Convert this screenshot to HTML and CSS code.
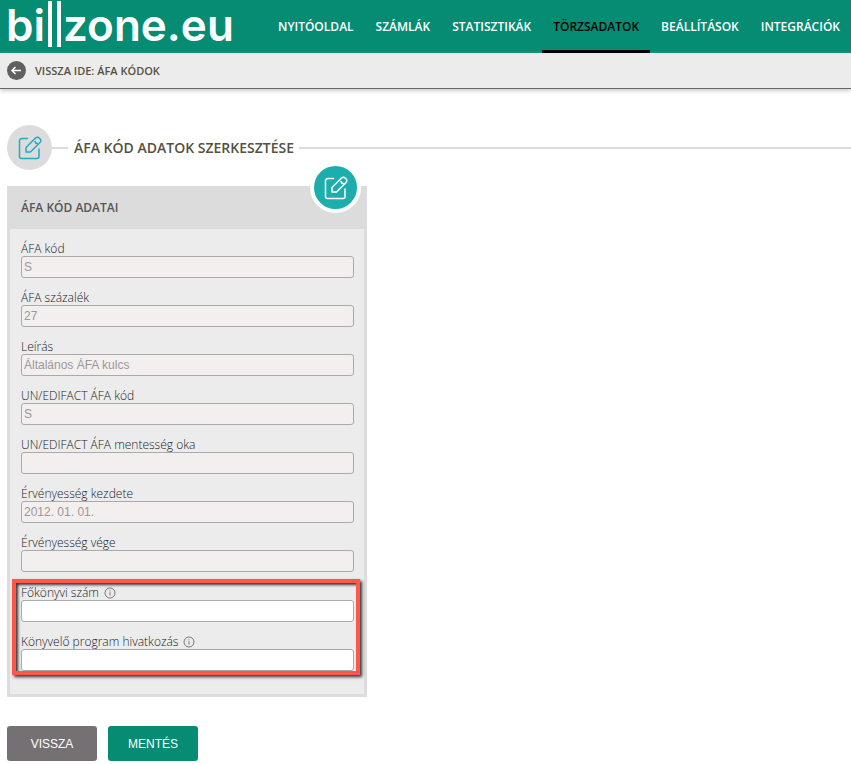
FILE: index.html
```
<!DOCTYPE html>
<html lang="hu">
<head>
	<meta charset="UTF-8">
	<title>billzone.eu - ÁFA kód adatok szerkesztése</title>
	<meta name="viewport" content="width=device-width,initial-scale=1">
	<link rel="stylesheet" href="styles.css">
</head>
<body>
	<!-- Icons -->
	<svg class="sprite" aria-hidden="true">
		<symbol id="icon-edit" viewBox="0 0 24 24">
			<path d="M9.500 2.500H4a2.500 2.500 0 0 0-2.500 2.500v15.500a2 2 0 0 0 2 2h15.500a2 2 0 0 0 2-2V13"/>
			<path d="M8 16v-4.500L17.500 2a2.600 2.600 0 0 1 3.700 0l.8.8a2.600 2.600 0 0 1 0 3.700L12.500 16zM17 5.500q.4 2 2.300 2"/>
		</symbol>
		<symbol id="icon-info" viewBox="0 0 12 12">
			<circle cx="6" cy="6" r="5"/>
			<path d="M6 5.200v3.300M6 3.300v1"/>
		</symbol>
	</svg>

	<!-- Menubar -->
	<header class="menubar">
		<a href="#" class="logo" aria-label="billzone.eu">
			<svg width="236" height="50" viewBox="0 0 236 50">
				<text x="-1" y="41">bi</text>
				<rect x="41" y="1" width="4" height="46"/>
				<rect x="50" y="1" width="4" height="46"/>
				<text x="56" y="41">zone.eu</text>
			</svg>
		</a>
		<nav class="menu">
			<a href="#">NYITÓOLDAL</a>
			<a href="#">SZÁMLÁK</a>
			<a href="#">STATISZTIKÁK</a>
			<a href="#" class="active">TÖRZSADATOK</a>
			<a href="#">BEÁLLÍTÁSOK</a>
			<a href="#">INTEGRÁCIÓK</a>
		</nav>
	</header>

	<!-- Back link -->
	<div class="backbar">
		<a href="#">
			<svg class="back-icon" width="19" height="19" viewBox="0 0 19 19">
				<circle cx="9.500" cy="9.500" r="9.500"/>
				<path d="M14 9.500H5M8.500 6l-3.500 3.500 3.500 3.500"/>
			</svg>
			VISSZA IDE: ÁFA KÓDOK
		</a>
	</div>

	<main>
		<div class="page-title">
			<span class="title-icon"><svg class="edit"><use href="#icon-edit"/></svg></span>
			<h1>ÁFA KÓD ADATOK SZERKESZTÉSE</h1>
		</div>

		<form>
			<section class="panel">
				<div class="panel-head">
					<h2>ÁFA KÓD ADATAI</h2>
					<button type="button" class="edit-button" aria-label="Szerkesztés"><svg class="edit"><use href="#icon-edit"/></svg></button>
				</div>
				<div class="fields">
					<div class="field">
						<label for="vat-code">ÁFA kód</label>
						<input type="text" id="vat-code" value="S" disabled>
					</div>
					<div class="field">
						<label for="vat-percent">ÁFA százalék</label>
						<input type="text" id="vat-percent" value="27" disabled>
					</div>
					<div class="field">
						<label for="description">Leírás</label>
						<input type="text" id="description" value="Általános ÁFA kulcs" disabled>
					</div>
					<div class="field">
						<label for="edifact-code">UN/EDIFACT ÁFA kód</label>
						<input type="text" id="edifact-code" value="S" disabled>
					</div>
					<div class="field">
						<label for="edifact-reason">UN/EDIFACT ÁFA mentesség oka</label>
						<input type="text" id="edifact-reason" disabled>
					</div>
					<div class="field">
						<label for="valid-from">Érvényesség kezdete</label>
						<input type="text" id="valid-from" value="2012. 01. 01." disabled>
					</div>
					<div class="field">
						<label for="valid-to">Érvényesség vége</label>
						<input type="text" id="valid-to" disabled>
					</div>
					<div class="highlight">
						<div class="field">
							<label for="ledger">Főkönyvi szám <svg class="info"><use href="#icon-info"/></svg></label>
							<input type="text" id="ledger">
						</div>
						<div class="field">
							<label for="accounting">Könyvelő program hivatkozás <svg class="info"><use href="#icon-info"/></svg></label>
							<input type="text" id="accounting">
						</div>
					</div>
				</div>
			</section>

			<div class="buttons">
				<button type="button" class="btn">VISSZA</button>
				<button type="submit" class="btn save">MENTÉS</button>
			</div>
		</form>
	</main>
</body>
</html>
```
FILE: styles.css
```
* {
	box-sizing: border-box;
}
body {
	margin: 0;
	background: #fff;
	color: #555;
	font-family: "Open Sans", sans-serif;
	font-size: 12px;
}
a {
	color: inherit;
	text-decoration: none;
}
h1, h2 {
	margin: 0;
	font-weight: 600;
}
.sprite {
	display: none;
}

/* Menubar */
.menubar {
	display: flex;
	justify-content: space-between;
	height: 53px;
	padding-left: 7px;
	background: #058c73;
	color: #fff;
}
.logo svg {
	display: block;
	overflow: visible;
	fill: #fff;
	font-family: Inter, sans-serif;
	font-size: 44px;
	font-weight: 600;
}
.menu {
	display: flex;
}
.menu a {
	display: flex;
	align-items: center;
	padding: 2px 11px 0;
	border-bottom: 3px solid transparent;
	font-weight: 600;
	white-space: nowrap;
}
.menu a.active {
	border-color: #000;
	color: #000;
}

/* Back link */
.backbar {
	display: flex;
	height: 36px;
	padding: 0 7px;
	background: #ececec;
	border-bottom: 1px solid #666;
	box-shadow: 0 2px 4px #ccc;
	color: #555140;
	font-size: 11px;
	font-weight: 600;
}
.backbar a {
	display: flex;
	align-items: center;
	gap: 9px;
}
.back-icon {
	fill: #606060;
}
.back-icon path {
	fill: none;
	stroke: #fff;
	stroke-width: 1.5;
}

main {
	padding: 36px 0 3px 7px;
}

/* Page title with the line running behind it */
.page-title {
	display: flex;
	align-items: center;
	margin-bottom: 16px;
}
.page-title::after {
	content: "";
	flex: 1;
	height: 2px;
	background: #dcdcdc;
}
.page-title h1 {
	display: flex;
	align-items: center;
	gap: 6px;
	margin-right: 5px;
	color: #555140;
	font-size: 14px;
}
.page-title h1::before {
	content: "";
	width: 16px;
	height: 2px;
	background: #dcdcdc;
}
.title-icon {
	display: flex;
	align-items: center;
	justify-content: center;
	width: 45px;
	height: 45px;
	border-radius: 50%;
	background: #dcdcdc;
	color: #26a9bf;
}
.edit {
	width: 24px;
	height: 24px;
	fill: none;
	stroke: currentColor;
	stroke-width: 1.5;
	stroke-linejoin: round;
	stroke-linecap: round;
}

/* Panel */
.panel {
	width: 360px;
	max-width: 100%;
	border: 3px solid #dcdcdc;
	background: #ececec;
}
.panel-head {
	position: relative;
	display: flex;
	align-items: center;
	height: 40px;
	padding: 0 11px 4px;
	background: #dcdcdc;
}
.panel-head h2 {
	font-size: 12px;
}
.edit-button {
	position: absolute;
	top: -27px;
	right: 3px;
	display: flex;
	align-items: center;
	justify-content: center;
	width: 51px;
	height: 51px;
	padding: 0;
	border: 4px solid #fff;
	border-radius: 50%;
	background: #1caeac;
	color: #fff;
}
.fields {
	display: flex;
	flex-direction: column;
	gap: 10px;
	padding: 10px 10px 23px 11px;
}
.field label {
	display: flex;
	align-items: center;
	gap: 5px;
	height: 17px;
	padding-top: 2px;
	font-weight: 300;
	color: #222;
}
.field input {
	display: block;
	width: 100%;
	height: 22px;
	padding: 0 2px;
	border: 1px solid #aaa;
	border-radius: 3px;
	background: #fff;
	color: #666;
	font: 12px "Liberation Sans", sans-serif;
}
.field input:disabled {
	background: #f3efee;
	color: #999;
}
.info {
	width: 12px;
	height: 12px;
	fill: none;
	stroke: #777;
}

/* Red frame around the two editable fields */
.highlight {
	position: relative;
	display: flex;
	flex-direction: column;
	gap: 10px;
	margin-top: 1px;
}
.highlight::after {
	content: "";
	position: absolute;
	inset: -4px -6px -4px -9px;
	border: 4px solid #ff574b;
	box-shadow: 2px 2px 3px #333, inset 2px 2px 3px #333;
	pointer-events: none;
}

/* Buttons */
.buttons {
	display: flex;
	gap: 11px;
	margin-top: 29px;
}
.btn {
	width: 90px;
	height: 35px;
	padding: 0;
	border: 0;
	border-radius: 3px;
	background: #757074;
	color: #fff;
	font: 12px "Liberation Sans", sans-serif;
}
.btn.save {
	background: #058c73;
}
```
